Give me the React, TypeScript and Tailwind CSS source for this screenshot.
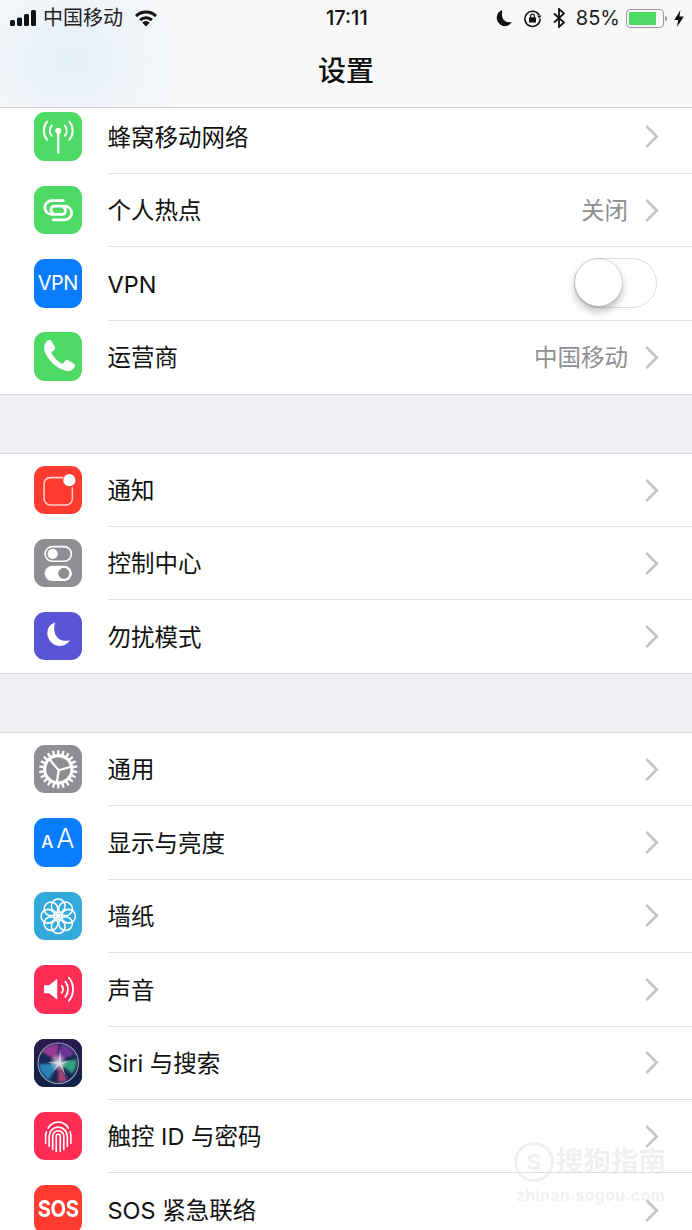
import type { ReactNode } from "react";

const CellularIcon = () => (
  <svg viewBox="0 0 48 48" className="h-full w-full" fill="none" stroke="white" strokeLinecap="round">
    <circle cx="24" cy="18.500" r="3" fill="white" stroke="none" />
    <path d="M24 20v20" strokeWidth="2.400" />
    <path d="M17.500 13.500a8 8 0 0 0 0 10M30.500 13.500a8 8 0 0 1 0 10" strokeWidth="2" />
    <path d="M13 9.500a14 14 0 0 0 0 18M35 9.500a14 14 0 0 1 0 18" strokeWidth="2" />
  </svg>
);

const HotspotIcon = () => (
  <svg viewBox="0 0 48 48" className="h-full w-full" fill="none" stroke="white" strokeWidth="2.700" strokeLinecap="round">
    <path d="M29 14.500H17.500a6.800 6.800 0 0 0 0 13.600H28a3.500 3.500 0 0 0 1.500-6.500" />
    <path d="M19 33.500H30.500a6.800 6.800 0 0 0 0-13.600H20a3.500 3.500 0 0 0-1.500 6.500" />
  </svg>
);

const PhoneIcon = () => (
  <svg viewBox="0 0 48 48" className="h-full w-full">
    <path
      fill="white"
      d="M13.500 8.500c1.500-1 3-.8 4 .8l3 5c.8 1.400.5 2.700-.8 3.700l-2 1.500c-.5.400-.6.900-.3 1.500 2.200 4.300 5.500 7.800 10 10.200.6.300 1.100.2 1.500-.3l1.600-2c1-1.200 2.300-1.500 3.700-.7l5 3c1.500 1 1.800 2.400.8 3.900-2 3-5 4.400-8.300 3.300C21.500 35.500 14 28 10.500 18.700 9.400 15 10.500 10.500 13.500 8.500z"
    />
  </svg>
);

const NotifyIcon = () => (
  <svg viewBox="0 0 48 48" className="h-full w-full" fill="none">
    <path d="M29 11.500H16a6 6 0 0 0-6 6v15a6 6 0 0 0 6 6h16a6 6 0 0 0 6-6V21" stroke="white" strokeOpacity="0.75" strokeWidth="1.500" />
    <circle cx="35" cy="14" r="6" fill="white" />
  </svg>
);

const ControlIcon = () => (
  <svg viewBox="0 0 48 48" className="h-full w-full" fill="none">
    <rect x="11" y="7.500" width="26" height="14.500" rx="7.250" stroke="white" strokeWidth="1.600" />
    <circle cx="18.500" cy="14.750" r="5" fill="white" />
    <rect x="10.500" y="26.500" width="27" height="15" rx="7.500" fill="white" />
    <circle cx="29.500" cy="34" r="5.500" fill="#8e8e93" />
  </svg>
);

const MoonIcon = () => (
  <svg viewBox="0 0 48 48" className="h-full w-full">
    <path fill="white" d="M21 10.500c-7 2-8.500 8.500-7.500 13 1.500 7 8 11 14 10 3-.5 6-2.200 8-5.500-6 1.700-12-.5-14.500-6-1.500-3.500-1.300-8 0-11.500z" />
  </svg>
);

const GearIcon = () => {
  const teeth = Array.from({ length: 22 }, (_, i) => (i * 360) / 22);
  return (
    <svg viewBox="0 0 48 48" className="h-full w-full" fill="none" stroke="white">
      {teeth.map((a) => (
        <path key={a} d="M22.700 9.500L23 5h2l.3 4.500z" fill="white" stroke="none" transform={`rotate(${a} 24 24)`} />
      ))}
      <circle cx="24" cy="24" r="13.500" strokeWidth="3" />
      <path d="M24.500 25L15.500 14.500M24.500 25L36.500 21.500M24.500 25L22.500 37.500" strokeWidth="2.200" />
    </svg>
  );
};

const WallpaperIcon = () => {
  const petals = Array.from({ length: 8 }, (_, i) => i * 45);
  return (
    <svg viewBox="0 0 48 48" className="h-full w-full" fill="none" stroke="white" strokeWidth="1.500">
      {petals.map((a) => (
        <circle key={a} cx="24" cy="13.800" r="6.800" transform={`rotate(${a} 24 24)`} />
      ))}
      <circle cx="24" cy="24" r="2.600" fill="white" stroke="none" />
    </svg>
  );
};

const SoundIcon = () => (
  <svg viewBox="0 0 48 48" className="h-full w-full" fill="none" stroke="white" strokeLinecap="round">
    <path d="M10 20h5l8-6.500v21L15 28h-5z" fill="white" stroke="none" />
    <path d="M27.500 20.500a6 6 0 0 1 0 7" strokeWidth="1.800" />
    <path d="M31 16.500a12 12 0 0 1 0 15" strokeWidth="1.800" />
    <path d="M34.500 12.500a18 18 0 0 1 0 23" strokeWidth="1.800" />
  </svg>
);

const SiriIcon = () => (
  <svg viewBox="0 0 48 48" className="h-full w-full">
    <defs>
      <linearGradient id="siriBg" x1="0" y1="0" x2="0" y2="1">
        <stop offset="0%" stopColor="#2b1a4e" />
        <stop offset="100%" stopColor="#12224a" />
      </linearGradient>
      <radialGradient id="siriGlow" cx="50%" cy="50%" r="50%">
        <stop offset="0%" stopColor="#ffffff" stopOpacity="0.75" />
        <stop offset="100%" stopColor="#ffffff" stopOpacity="0" />
      </radialGradient>
      <filter id="siriBlur">
        <feGaussianBlur stdDeviation="1.200" />
      </filter>
    </defs>
    <rect width="48" height="48" fill="url(#siriBg)" />
    <circle cx="24" cy="24" r="20" fill="#1b2a55" stroke="#9fb0c4" strokeWidth="1" />
    <g filter="url(#siriBlur)">
      <path d="M24 22L8 13a19 19 0 0 1 16-8z" fill="#a93c9a" opacity="0.85" />
      <path d="M24 22L27 5a19 19 0 0 1 13 10z" fill="#7d3aa8" opacity="0.8" />
      <path d="M24 24L42 20a19 19 0 0 1-4 14z" fill="#35b58a" opacity="0.85" />
      <path d="M24 24L33 40a19 19 0 0 1-9 3z" fill="#c8457c" opacity="0.8" />
      <path d="M24 24L15 40a19 19 0 0 1-10-15z" fill="#2a93c9" opacity="0.85" />
    </g>
    <circle cx="24" cy="23" r="9" fill="url(#siriGlow)" />
    <path d="M24 24L26 10l1 13 11-2-10 4 3 11-6-10-8 8 6-9-10-2 10-1z" fill="white" opacity="0.55" />
  </svg>
);

const FingerprintIcon = () => (
  <svg viewBox="0 0 48 48" className="h-full w-full" fill="none" stroke="white" strokeWidth="1.600" strokeLinecap="round">
    <path d="M14 16C16 12 19.500 10 24 10s8 2 10 6" />
    <path d="M11.500 31v-7a13 13 0 0 1 .8-4.500" />
    <path d="M36.500 31v-7a13 13 0 0 0-.8-4.500" />
    <path d="M15 34V24a9 9 0 0 1 18 0v10" />
    <path d="M18.500 37V24a5.500 5.500 0 0 1 11 0v13" />
    <path d="M22 39V24a2 2 0 0 1 4 0v15" />
  </svg>
);

const Chevron = () => (
  <svg viewBox="0 0 14 24" className="h-[23px] w-[14px] shrink-0" fill="none">
    <path d="M2 2l10 10L2 22" stroke="#c4c4c7" strokeWidth="2.700" strokeLinecap="square" />
  </svg>
);

type RowData = {
  label: string;
  color: string;
  icon: ReactNode;
  value?: string;
  toggle?: boolean;
};

const carrierRows: RowData[] = [
  { label: "个人热点", color: "bg-[#4cd964]", icon: <HotspotIcon />, value: "关闭" },
  { label: "VPN", color: "bg-[#0a7cff]", icon: <span className="text-[20px] tracking-[-0.5px] text-white">VPN</span>, toggle: true },
  { label: "运营商", color: "bg-[#4cd964]", icon: <PhoneIcon />, value: "中国移动" },
];

const noticeRows: RowData[] = [
  { label: "通知", color: "bg-[#ff3b30]", icon: <NotifyIcon /> },
  { label: "控制中心", color: "bg-[#8e8e93]", icon: <ControlIcon /> },
  { label: "勿扰模式", color: "bg-[#5856d6]", icon: <MoonIcon /> },
];

const generalRows: RowData[] = [
  { label: "通用", color: "bg-[#8e8e93]", icon: <GearIcon /> },
  {
    label: "显示与亮度",
    color: "bg-[#0a7cff]",
    icon: (
      <span className="flex -translate-y-[3px] items-baseline gap-[3px] text-white">
        <span className="text-[17px] font-medium">A</span>
        <span className="text-[27px] font-light">A</span>
      </span>
    ),
  },
  { label: "墙纸", color: "bg-[#34aadc]", icon: <WallpaperIcon /> },
  { label: "声音", color: "bg-[#ff2d55]", icon: <SoundIcon /> },
  { label: "Siri 与搜索", color: "bg-[#1b1b45]", icon: <SiriIcon /> },
  { label: "触控 ID 与密码", color: "bg-[#ff2d55]", icon: <FingerprintIcon /> },
  {
    label: "SOS 紧急联络",
    color: "bg-[#ff3b30]",
    icon: <span className="text-[23px] font-bold tracking-[-0.5px] text-white [transform:scaleX(0.88)]">SOS</span>,
  },
];

function Row({ row, last, height = "h-[73.3px]" }: { row: RowData; last?: boolean; height?: string }) {
  return (
    <div className={`flex items-stretch pl-[33.5px] ${height}`}>
      <div className="flex shrink-0 items-center pb-[1px]">
        <div className={`flex h-[48.5px] w-[48.5px] items-center justify-center overflow-hidden rounded-[11px] ${row.color}`}>
          {row.icon}
        </div>
      </div>
      <div className={`ml-[25.5px] flex min-w-0 flex-1 items-center justify-between pr-[33px] ${last ? "" : "border-b border-[#dfdfe2]"}`}>
        <span className="translate-y-[1px] text-[23.5px] leading-none text-[#111]">{row.label}</span>
        {row.toggle ? (
          <div className="relative mr-[2px] h-[50px] w-[83px] rounded-full border-[1.5px] border-[#dedee0] bg-white">
            <div className="absolute top-0 left-0 h-[47px] w-[47px] rounded-full bg-white shadow-[0_5px_9px_rgba(0,0,0,0.28),0_0_2px_rgba(0,0,0,0.25)]" />
          </div>
        ) : (
          <div className="flex items-center gap-[17px]">
            {row.value && <span className="translate-y-[1px] text-[23.5px] leading-none text-[#8e8e93]">{row.value}</span>}
            <Chevron />
          </div>
        )}
      </div>
    </div>
  );
}

function Group({ rows, height }: { rows: RowData[]; height: string }) {
  return (
    <div className="border-y border-[#d9d9dc] bg-white">
      {rows.map((r, i) => (
        <Row key={r.label} row={r} height={height} last={i === rows.length - 1} />
      ))}
    </div>
  );
}

function StatusBar() {
  return (
    <div className="relative flex h-[36px] items-center justify-between pr-[8px] pl-[10px] text-[20px] leading-none text-[#111]">
      <div className="flex items-center">
        <svg viewBox="0 0 27 16" className="h-[16px] w-[27px]" fill="#111">
          <rect x="0" y="10" width="5" height="6" rx="1.500" />
          <rect x="7" y="7.500" width="5" height="8.500" rx="1.500" />
          <rect x="14" y="4" width="5" height="12" rx="1.500" />
          <rect x="21" y="0" width="5" height="16" rx="1.500" />
        </svg>
        <span className="ml-[6px] text-[#222]">中国移动</span>
        <svg viewBox="0 0 24 18" className="ml-[11px] h-[17px] w-[24px]" fill="none" stroke="#111" strokeWidth="3.200">
          <path d="M1.500 6.500a15 15 0 0 1 21 0" />
          <path d="M5.800 10.700a9 9 0 0 1 12.400 0" />
          <path d="M12 17.500l-4-4.200a5.800 5.800 0 0 1 8 0z" fill="#111" stroke="none" />
        </svg>
      </div>
      <span className="absolute left-[326px] font-medium">17:11</span>
      <div className="flex items-center">
        <svg viewBox="0 0 17 18" className="h-[18px] w-[16px]" fill="#111">
          <path d="M6.500 .5C2.500 2 .5 5.500 .8 9.500c.5 4.500 4.200 8 8.500 8 3 0 6-1.500 7.500-4.300-4.500 1-8.800-.5-10-4.700-.7-2.800-.2-5.500-.3-8z" />
        </svg>
        <svg viewBox="0 0 20 20" className="ml-[11px] h-[19px] w-[19px]" fill="none" stroke="#111">
          <path d="M17 6.500A8 8 0 1 0 18 10" strokeWidth="1.600" />
          <path d="M15 6.800h4.500L17 10z" fill="#111" stroke="none" />
          <rect x="6.300" y="8.800" width="7.400" height="5.500" rx="1" fill="#111" stroke="none" />
          <path d="M8 9V7.500a2 2 0 0 1 4 0V9" strokeWidth="1.300" />
        </svg>
        <svg viewBox="0 0 12 20" className="ml-[11px] h-[20px] w-[12px]" fill="none" stroke="#111" strokeWidth="1.800">
          <path d="M1 5.500l10 9L6 19V1l5 4.500-10 9" />
        </svg>
        <span className="ml-[11px] text-[#222]">85%</span>
        <div className="ml-[6px] flex items-center">
          <div className="h-[19px] w-[38px] rounded-[4px] border-[1.5px] border-[#9a9a9a] p-[2px]">
            <div className="h-full w-[85%] rounded-[1px] bg-[#4cd964]" />
          </div>
          <div className="ml-[1px] h-[5px] w-[2px] rounded-r-sm bg-[#9a9a9a]" />
        </div>
        <svg viewBox="0 0 10 18" className="ml-[7px] h-[17px] w-[10px]" fill="#111">
          <path d="M6.500 0L0 10.500h4L3 18l7-11H5.500z" />
        </svg>
      </div>
    </div>
  );
}

export default function App() {
  return (
    <div className="relative h-[1230px] w-[692px] overflow-hidden bg-[#efeff4] font-['Inter','Noto_Sans_CJK_SC',sans-serif]">
      <header className="h-[108px] border-b border-[#d4d4d6] bg-[radial-gradient(ellipse_130px_110px_at_70px_60px,#e4f0f9_0%,#f1f5f9_60%,#f8f8f9_100%)]">
        <StatusBar />
        <h1 className="mt-[3px] text-center text-[28px] leading-[64px] font-medium text-[#111]">设置</h1>
      </header>

      <div className="h-[287px] border-b border-[#d9d9dc] bg-white">
        <div className="flex h-[66px] items-stretch pl-[33.5px]">
          <div className="shrink-0 pt-[4px]">
            <div className="h-[48.5px] w-[48.5px] overflow-hidden rounded-[11px] bg-[#4cd964]">
              <CellularIcon />
            </div>
          </div>
          <div className="ml-[25.5px] flex min-w-0 flex-1 items-center justify-between border-b border-[#dfdfe2] pt-[1px] pr-[33px] pb-[6px]">
            <span className="text-[23.5px] leading-none text-[#111]">蜂窝移动网络</span>
            <div className="-translate-y-[2px]">
              <Chevron />
            </div>
          </div>
        </div>
        {carrierRows.map((r, i) => (
          <Row key={r.label} row={r} last={i === carrierRows.length - 1} />
        ))}
      </div>

      <div className="h-[58px]" />
      <Group rows={noticeRows} height="h-[73px]" />
      <div className="h-[58px]" />
      <Group rows={generalRows} height="h-[73.4px]" />

      <div className="absolute top-[1142px] left-[514px] flex items-center gap-[2px] opacity-45">
        <div className="flex h-[40px] w-[40px] items-center justify-center rounded-full border-[3px] border-[#e0e0e0] text-[22px] font-bold text-[#e0e0e0]">S</div>
        <span className="text-[27.5px] leading-none font-bold text-[#e0e0e0]">搜狗指南</span>
      </div>
      <div className="absolute top-[1188px] left-[516px] text-[15.5px] leading-none font-bold tracking-[0.5px] text-[#e8e8e8] opacity-60">zhinan.sogou.com</div>
    </div>
  );
}
